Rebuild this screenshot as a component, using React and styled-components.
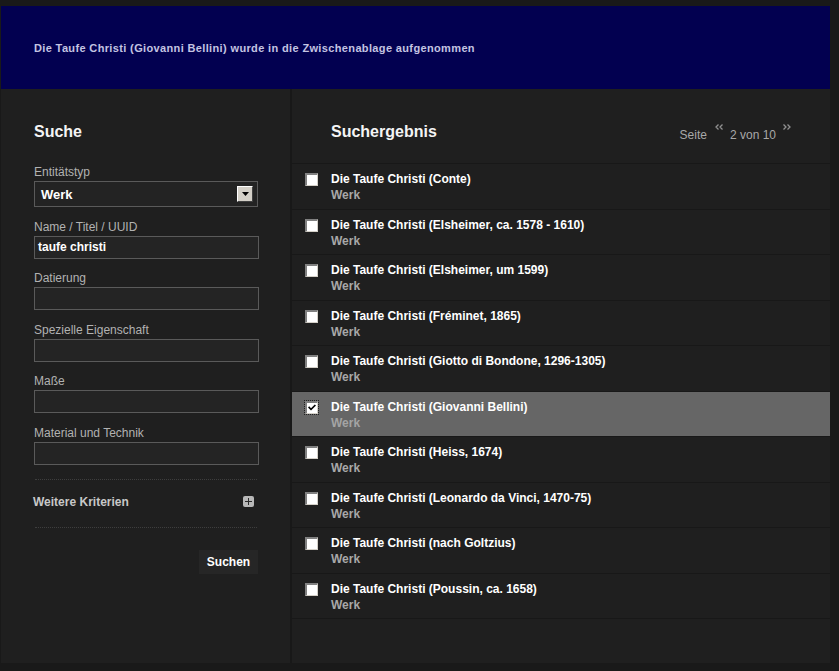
import React from 'react'
import styled, { createGlobalStyle } from 'styled-components'

const GlobalStyle = createGlobalStyle`
  html, body {
    margin: 0;
    padding: 0;
    background: #191919;
    font-family: "Liberation Sans", Arial, sans-serif;
  }
`

const Page = styled.div`
  width: 829px;
  padding: 6px 0 0 1px;
`

const Banner = styled.div`
  height: 83px;
  background: #020050;
  display: flex;
  align-items: center;
  padding-left: 33px;
  box-sizing: border-box;
  color: #c4c4e2;
  font-size: 11px;
  letter-spacing: 0.36px;
  font-weight: bold;
`

const Main = styled.div`
  display: flex;
  height: 574px;
  background: #1f1f1f;
`

const SidePanel = styled.div`
  width: 291px;
  flex-shrink: 0;
  box-sizing: border-box;
  padding: 33px 32px 0 33px;
  border-right: 2px solid #181818;
`

const ResultPanel = styled.div`
  flex: 1;
`

const Heading = styled.h2`
  margin: 0;
  font-size: 16px;
  line-height: 20px;
  font-weight: bold;
  color: #f4f4f4;
`

const Form = styled.div`
  margin-top: 23px;
  display: flex;
  flex-direction: column;
  gap: 12.5px;
`

const Field = styled.div`
  display: flex;
  flex-direction: column;
  gap: 2px;
`

const Label = styled.label`
  font-size: 12px;
  line-height: 14px;
  color: #b2b2b2;
`

const SelectBox = styled.div`
  width: 224px;
  height: 26px;
  box-sizing: border-box;
  border: 1px solid #5a5a5a;
  background: #232323;
  display: flex;
  align-items: center;
  justify-content: space-between;
  padding: 0 4px 0 6px;
  color: #fff;
  font-size: 13px;
  font-weight: bold;
`

const DropButton = styled.span`
  width: 16px;
  height: 16px;
  box-sizing: border-box;
  background: #d4d0c8;
  border-style: solid;
  border-width: 1px;
  border-color: #fff #404040 #404040 #fff;
  display: flex;
  align-items: center;
  justify-content: center;
`

const TextInput = styled.div`
  width: 225px;
  height: 23px;
  box-sizing: border-box;
  border: 1px solid #5a5a5a;
  background: #242424;
  display: flex;
  align-items: center;
  padding-left: 3px;
  color: #fff;
  font-size: 12px;
  font-weight: bold;
`

const Divider = styled.div`
  width: 222px;
  margin-left: 1px;
  border-top: 1px dotted #3e3e3e;
`

const MoreRow = styled.div`
  margin-top: 14px;
`

const MoreToggle = styled.div`
  height: 47px;
  width: 222px;
  display: flex;
  align-items: center;
  justify-content: space-between;
  box-sizing: border-box;
  padding: 0 1px 3px 0;
  margin-left: -1px;
  color: #c8c8c8;
  font-size: 12px;
  font-weight: bold;
`

const PlusIcon = styled.span`
  width: 11px;
  height: 11px;
  border-radius: 2px;
  background: #b8b8b8;
  display: flex;
  align-items: center;
  justify-content: center;
`

const ButtonRow = styled.div`
  display: flex;
  justify-content: flex-end;
  width: 224px;
  margin-top: 22px;
`

const SearchButton = styled.button`
  width: 59px;
  height: 24px;
  border: none;
  background: #262626;
  color: #fff;
  font-family: inherit;
  font-size: 12px;
  font-weight: bold;
  padding: 0;
`

const ResultHeader = styled.div`
  height: 75px;
  border-bottom: 1px solid #181818;
  display: flex;
  align-items: flex-start;
  justify-content: space-between;
  padding: 33px 38px 0 39px;
  box-sizing: border-box;
`

const Pager = styled.div`
  display: flex;
  align-items: flex-start;
  gap: 7px;
  font-size: 12px;
  line-height: 14px;
  color: #a8a8a8;
  margin-top: 6px;
`

const PagerArrow = styled.span`
  display: flex;
  margin-top: -4px;
`

const Row = styled.div`
  height: 44.5px;
  border-bottom: 1px solid #181818;
  display: flex;
  align-items: flex-start;
  background: ${p => (p.selected ? '#666666' : 'transparent')};
`

const CheckCell = styled.div`
  width: 39px;
  padding: 9px 0 0 13px;
  box-sizing: border-box;
`

const Checkbox = styled.span`
  display: flex;
  align-items: center;
  justify-content: center;
  width: 13px;
  height: 13px;
  box-sizing: border-box;
  background: #fff;
  border-style: solid;
  border-width: 2px 1px 1px 2px;
  border-color: #808080 #d4d0c8 #d4d0c8 #808080;
  outline: ${p => (p.checked ? '1px dotted #222' : 'none')};
  outline-offset: 0;
`

const RowText = styled.div`
  padding-top: 8px;
  display: flex;
  flex-direction: column;
  gap: 2px;
`

const Title = styled.div`
  font-size: 12px;
  line-height: 14px;
  font-weight: bold;
  color: #fff;
`

const TypeTag = styled.div`
  font-size: 12px;
  line-height: 14px;
  font-weight: bold;
  color: ${p => (p.selected ? '#a4a4a4' : '#a8a8a8')};
`

const results = [
  'Die Taufe Christi (Conte)',
  'Die Taufe Christi (Elsheimer, ca. 1578 - 1610)',
  'Die Taufe Christi (Elsheimer, um 1599)',
  'Die Taufe Christi (Fréminet, 1865)',
  'Die Taufe Christi (Giotto di Bondone, 1296-1305)',
  'Die Taufe Christi (Giovanni Bellini)',
  'Die Taufe Christi (Heiss, 1674)',
  'Die Taufe Christi (Leonardo da Vinci, 1470-75)',
  'Die Taufe Christi (nach Goltzius)',
  'Die Taufe Christi (Poussin, ca. 1658)',
]

const fields = ['Datierung', 'Spezielle Eigenschaft', 'Maße', 'Material und Technik']

function Chevrons({ right }) {
  // kleine Doppelpfeile der Seitennavigation
  return (
    <svg width="9" height="6" viewBox="0 0 9 6" style={right ? undefined : { transform: 'scaleX(-1)' }}>
      <path d="M0.5 0.5L3 3L0.5 5.5M4.5 0.5L7 3L4.5 5.5" stroke="#909090" strokeWidth="1.3" fill="none" />
    </svg>
  )
}

function App() {
  return (
    <Page>
      <GlobalStyle />
      <Banner>Die Taufe Christi (Giovanni Bellini) wurde in die Zwischenablage aufgenommen</Banner>
      <Main>
        <SidePanel>
          <Heading>Suche</Heading>
          <Form>
            <Field>
              <Label>Entitätstyp</Label>
              <SelectBox>
                Werk
                <DropButton>
                  <svg width="7" height="4" viewBox="0 0 7 4">
                    <path d="M0 0h7L3.5 4z" fill="#000" />
                  </svg>
                </DropButton>
              </SelectBox>
            </Field>
            <Field>
              <Label>Name / Titel / UUID</Label>
              <TextInput>taufe christi</TextInput>
            </Field>
            {fields.map(f => (
              <Field key={f}>
                <Label>{f}</Label>
                <TextInput />
              </Field>
            ))}
          </Form>
          <MoreRow>
            <Divider />
            <MoreToggle>
              Weitere Kriterien
              <PlusIcon>
                <svg width="7" height="7" viewBox="0 0 7 7">
                  <path d="M3 0h1v3h3v1H4v3H3V4H0V3h3z" fill="#2a2a2a" />
                </svg>
              </PlusIcon>
            </MoreToggle>
            <Divider />
          </MoreRow>
          <ButtonRow>
            <SearchButton>Suchen</SearchButton>
          </ButtonRow>
        </SidePanel>
        <ResultPanel>
          <ResultHeader>
            <Heading>Suchergebnis</Heading>
            <Pager>
              <span>Seite</span>
              <PagerArrow><Chevrons /></PagerArrow>
              <span>2 von 10</span>
              <PagerArrow><Chevrons right /></PagerArrow>
            </Pager>
          </ResultHeader>
          {results.map((r, i) => {
            const selected = i === 5
            return (
              <Row key={r} selected={selected}>
                <CheckCell>
                  <Checkbox checked={selected}>
                    {selected && (
                      <svg width="8" height="8" viewBox="0 0 8 8">
                        <path d="M0 3.5l1.2-1.2L3 4.2 6.8 0.4 8 1.6 3 6.6z" fill="#000" />
                      </svg>
                    )}
                  </Checkbox>
                </CheckCell>
                <RowText>
                  <Title>{r}</Title>
                  <TypeTag selected={selected}>Werk</TypeTag>
                </RowText>
              </Row>
            )
          })}
        </ResultPanel>
      </Main>
    </Page>
  )
}

export default App
